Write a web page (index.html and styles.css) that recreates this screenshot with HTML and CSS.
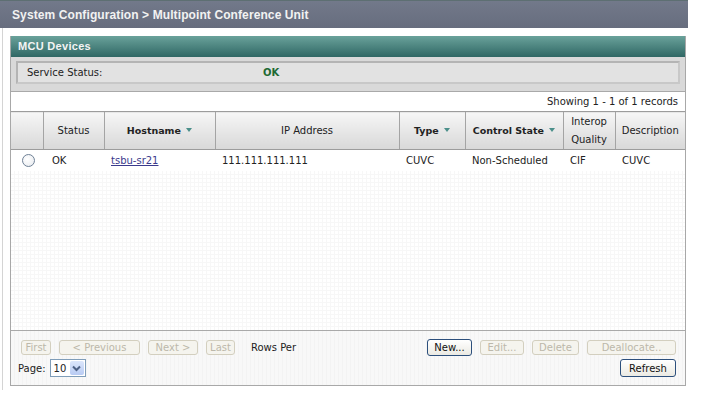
FILE: index.html
```html
<!DOCTYPE html>
<html lang="en">
<head>
  <meta charset="UTF-8" />
  <title>Multipoint Conference Unit</title>
  <link rel="stylesheet" href="styles.css">
</head>
<body>

  <div class="titlebar">System Configuration &gt; Multipoint Conference Unit</div>

  <div class="content">
    <div class="panel">
      <div class="panel-head">MCU Devices</div>

      <div class="service-wrap">
        <div class="service">
          <span class="service-label">Service Status:</span>
          <span class="service-value">OK</span>
        </div>
      </div>

      <div class="records">Showing 1 - 1 of 1 records</div>

      <table class="grid">
        <colgroup>
          <col style="width:32px">
          <col style="width:61px">
          <col style="width:111px">
          <col style="width:184px">
          <col style="width:66px">
          <col style="width:98px">
          <col style="width:52px">
          <col style="width:70px">
        </colgroup>
        <thead>
          <tr>
            <th></th>
            <th>Status</th>
            <th class="sort">Hostname <span class="arrow"></span></th>
            <th>IP Address</th>
            <th class="sort">Type <span class="arrow"></span></th>
            <th class="sort">Control State <span class="arrow"></span></th>
            <th>Interop<br>Quality</th>
            <th>Description</th>
          </tr>
        </thead>
        <tbody>
          <tr>
            <td class="pick"><span class="radio"></span></td>
            <td>OK</td>
            <td><a href="#">tsbu-sr21</a></td>
            <td>111.111.111.111</td>
            <td>CUVC</td>
            <td>Non-Scheduled</td>
            <td>CIF</td>
            <td>CUVC</td>
          </tr>
        </tbody>
      </table>

      <div class="empty"></div>

      <div class="footer">
        <div class="footer-row">
          <div class="pager">
            <button class="btn btn-first" disabled>First</button>
            <button class="btn btn-prev" disabled>&lt; Previous</button>
            <button class="btn btn-next" disabled>Next &gt;</button>
            <button class="btn btn-last" disabled>Last</button>
            <span class="rows-per">Rows Per</span>
          </div>
          <div class="actions">
            <button class="btn btn-on btn-new">New...</button>
            <button class="btn btn-edit" disabled>Edit...</button>
            <button class="btn btn-delete" disabled>Delete</button>
            <button class="btn btn-wide" disabled>Deallocate..</button>
          </div>
        </div>
        <div class="footer-row">
          <div class="page-size">
            Page:
            <span class="select">
              <span class="select-val">10</span>
              <span class="select-btn">
                <svg width="9" height="7" viewBox="0 0 9 7"><path d="M1 1.5 L4.5 5 L8 1.5" fill="none" stroke="#4d6185" stroke-width="2"/></svg>
              </span>
            </span>
          </div>
          <button class="btn btn-on btn-refresh">Refresh</button>
        </div>
      </div>
    </div>
  </div>

</body>
</html>
```

FILE: styles.css
```css
body {
  margin: 0;
  background: #fff;
  font-family: "DejaVu Sans", Verdana, sans-serif;
  font-size: 10px;
  color: #222;
}

.titlebar {
  width: 688px;
  height: 28px;
  padding-left: 12px;
  line-height: 28px;
  background: linear-gradient(#72798a, #676d7e);
  border-top: 1px solid #5d6f72;
  box-sizing: border-box;
  color: #f2f2f2;
  font-family: "Liberation Sans", Arial, sans-serif;
  font-weight: bold;
  font-size: 12px;
  letter-spacing: 0.1px;
}

.content {
  margin-left: 2px;
  border-left: 1px solid #d4d4d4;
  padding: 8px 0 4px 7px;
  width: 677px;
}

.panel {
  width: 676px;
  border: 1px solid #a8a8a8;
  border-top: none;
  box-sizing: border-box;
}

.panel-head {
  height: 21px;
  line-height: 21px;
  padding-left: 7px;
  background: linear-gradient(#6aa29b, #2f6764);
  color: #f4f4f4;
  font-family: "Liberation Sans", Arial, sans-serif;
  font-weight: bold;
  font-size: 11px;
  letter-spacing: 0.3px;
}

.service-wrap {
  background: #d9d9d9;
  padding: 4px 5px 7px 5px;
  border-bottom: 1px solid #a9a9a9;
}

.service {
  display: flex;
  height: 19px;
  align-items: center;
  border: 2px solid #b4b4b4;
  border-right-color: #c8c8c8;
  border-bottom-color: #c8c8c8;
  background: #e2e2e2;
  padding-left: 9px;
}

.service-label {
  width: 236px;
}

.service-value {
  color: #1e6a34;
  font-weight: bold;
}

.records {
  height: 19px;
  line-height: 20px;
  text-align: right;
  padding-right: 7px;
  background: #fff;
}

.grid {
  width: 674px;
  table-layout: fixed;
  border-collapse: collapse;
  background: #fff;
}

.grid th {
  height: 37px;
  padding: 0 2px;
  background: linear-gradient(#f6f6f6, #d8d8d8);
  border-top: 1px solid #9c9c9c;
  border-bottom: 1px solid #9c9c9c;
  border-left: 1px solid #a4a4a4;
  font-weight: normal;
  line-height: 18px;
  color: #222;
}

.grid th:first-child {
  border-left: none;
}

.grid th.sort {
  font-weight: bold;
  font-size: 9.5px;
}

.arrow {
  display: inline-block;
  width: 0;
  height: 0;
  margin-left: 2px;
  vertical-align: 2px;
  border-left: 3px solid transparent;
  border-right: 3px solid transparent;
  border-top: 4px solid #4a8f8a;
}

.grid td {
  height: 21px;
  padding: 0 0 0 7px;
  white-space: nowrap;
}

.grid td:nth-child(2) {
  padding-left: 9px;
}

.grid td.pick {
  padding-left: 11px;
}

.grid a {
  color: #3a3a8c;
}

.radio {
  display: block;
  width: 11px;
  height: 11px;
  border: 1px solid #6f8196;
  border-radius: 50%;
  background: radial-gradient(circle at 40% 40%, #fff, #e6e9ee);
}

.empty {
  height: 159px;
  background-color: #fff;
  background-image:
    repeating-linear-gradient(90deg, transparent 0 3px, #f7f7f7 3px 4px),
    repeating-linear-gradient(0deg, transparent 0 3px, #f7f7f7 3px 4px);
  border-bottom: 1px solid #a9a9a9;
}

.footer {
  height: 54px;
  padding: 8px 9px 0 7px;
  box-sizing: border-box;
  background-color: #f8f8f8;
  background-image:
    repeating-linear-gradient(90deg, transparent 0 3px, #f3f3f3 3px 4px);
}

.footer-row {
  display: flex;
  justify-content: space-between;
  align-items: center;
}

.footer-row + .footer-row {
  margin-top: 3px;
}

.pager,
.actions {
  display: flex;
  align-items: center;
  gap: 8px;
}

.pager {
  margin-left: 3px;
}

.btn {
  height: 15px;
  padding: 0;
  font-family: "DejaVu Sans", Verdana, sans-serif;
  font-size: 10px;
  line-height: 13px;
  border: 1px solid #d3cfbf;
  border-radius: 3px;
  background: #f5f4ee;
  color: #bcb8aa;
}

.btn-first { width: 30px; }
.btn-prev { width: 81px; }
.btn-next { width: 50px; }
.btn-last { width: 29px; }
.btn-new { width: 45px; }
.btn-edit { width: 44px; }
.btn-delete { width: 47px; }
.btn-wide { width: 89px; }

.btn-on {
  color: #111;
  border-color: #2c4f7c;
  background: linear-gradient(#ffffff, #ebeae3);
  height: 17px;
}

.rows-per {
  margin-left: 8px;
  color: #222;
}

.page-size {
  display: flex;
  align-items: center;
  gap: 4px;
}

.select {
  display: flex;
  align-items: center;
  height: 16px;
  width: 34px;
  border: 1px solid #7f9db9;
  background: #fff;
}

.select-val {
  flex: 1;
  padding-left: 3px;
}

.select-btn {
  display: flex;
  align-items: center;
  justify-content: center;
  width: 14px;
  height: 14px;
  margin-right: 1px;
  background: linear-gradient(#dbe6fb, #b8cbf3);
  border-radius: 2px;
}

.btn-refresh {
  width: 56px;
  height: 18px;
}
```
